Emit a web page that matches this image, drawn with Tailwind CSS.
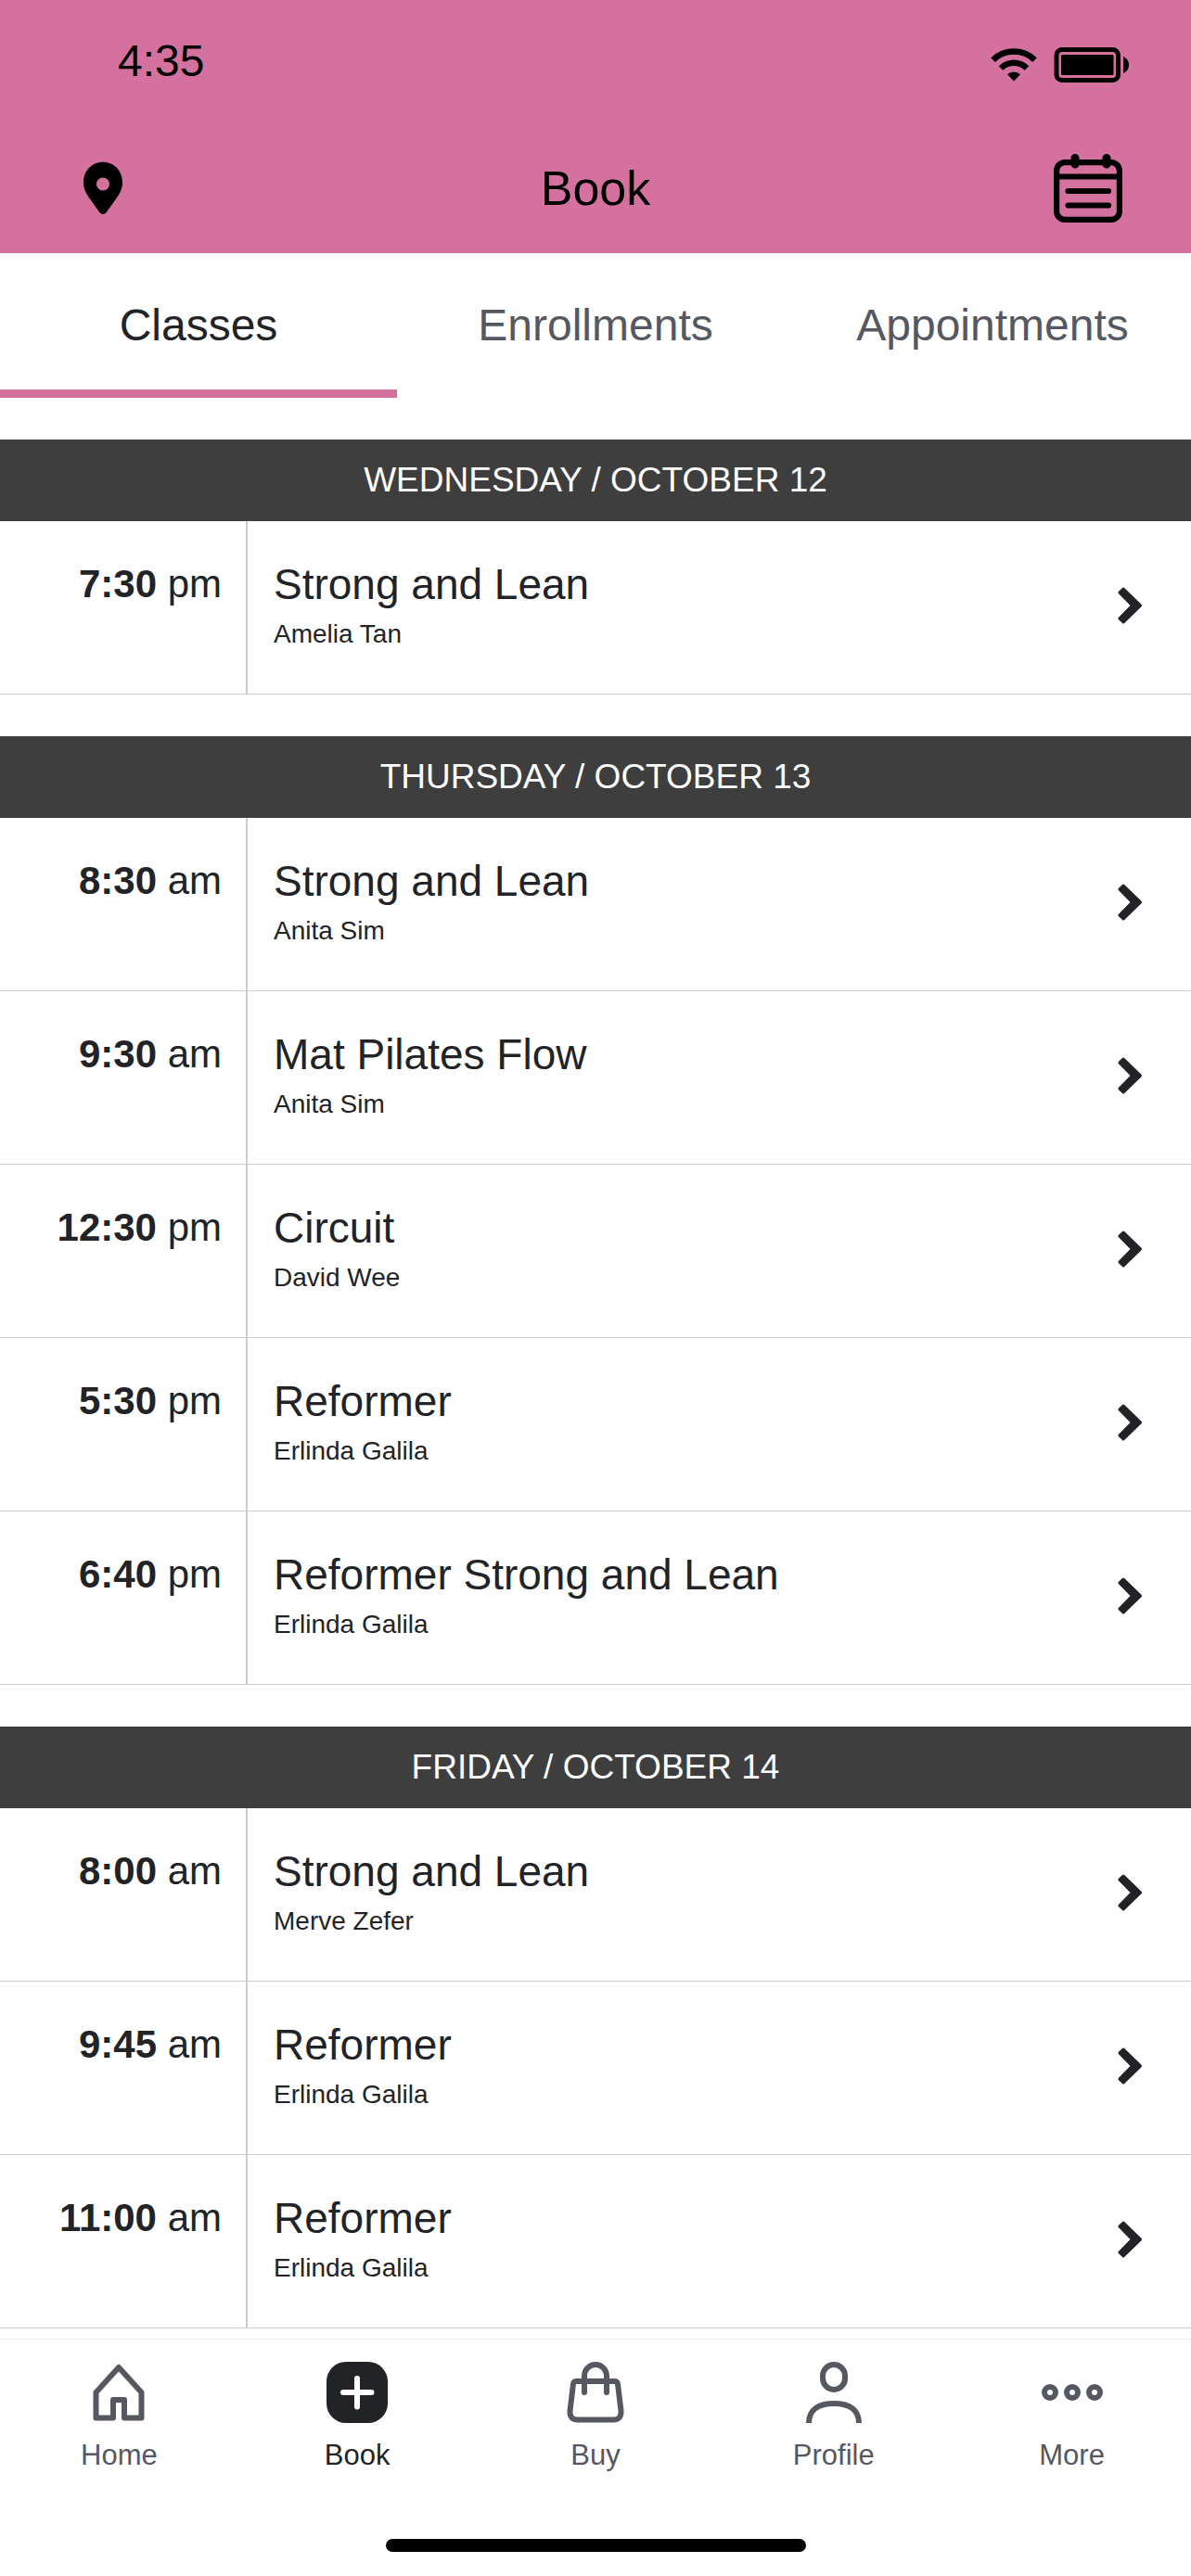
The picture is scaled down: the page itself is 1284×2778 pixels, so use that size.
<!DOCTYPE html>
<html lang="en">
<head>
<meta charset="utf-8">
<meta name="viewport" content="width=device-width, initial-scale=1">
<title>Book</title>
<script src="https://cdn.jsdelivr.net/npm/@tailwindcss/browser@4"></script>
</head>
<body class="flex min-h-screen flex-col bg-white font-['Liberation_Sans',Arial,sans-serif] text-[#222327]">
  <header class="bg-[#d5719f] text-black">
    <div class="flex h-[132px] items-center justify-between pr-[66px] pl-[127px]">
      <time class="text-[48px] leading-[60px]">4:35</time>
      <div class="flex items-center gap-[18px] pt-2">
        <svg class="h-9 w-[50px]" viewBox="0 0 50 36" fill="none" stroke="currentColor" stroke-width="6.5" aria-label="Wi-Fi">
          <path d="M2.500 12.600A32.500 32.500 0 0 1 47.500 12.600"/>
          <path d="M11 21.500A20 20 0 0 1 39 21.500"/>
          <path d="M25 35.500l-7-7.200a10 10 0 0 1 14 0z" fill="currentColor" stroke="none"/>
        </svg>
        <svg class="h-[38px] w-[82px]" viewBox="0 0 82 38" aria-label="Battery full">
          <rect x="3" y="2.5" width="66.5" height="33" rx="6" fill="none" stroke="currentColor" stroke-width="5"/>
          <rect x="8" y="8" width="56.5" height="22" rx="1.5"/>
          <path d="M75 10c3.500 1.500 6 5 6 9s-2.500 7.500-6 9z"/>
        </svg>
      </div>
    </div>
    <div class="grid h-[141px] grid-cols-3 items-center px-[74px]">
      <button type="button" class="justify-self-start pl-[15px]" aria-label="Locations">
        <svg class="h-[57px] w-11" viewBox="0 0 44 57"><path fill="currentColor" fill-rule="evenodd" d="M22 .8C10 .8 1 10.500 1 22.500c0 7.500 3 12.500 7 18L18.500 55.200q3.500 3.600 7 0L36 40.500c4-5.500 7-10.500 7-18C43 10.500 34 .8 22 .8zm0 16.700a7 7 0 1 1 0 14 7 7 0 0 1 0-14z"/></svg>
      </button>
      <h1 class="text-center text-[52px] leading-[60px]">Book</h1>
      <button type="button" class="justify-self-end" aria-label="Calendar">
        <svg class="h-[75px] w-[74px]" viewBox="0 0 74 75" fill="none" stroke="currentColor" stroke-width="6.2" stroke-linecap="round">
          <rect x="3.1" y="10.1" width="67.8" height="61.8" rx="9"/><path d="M5 25.500h64" stroke-linecap="butt"/><path d="M15.500 41h43.500M15.500 56.500h43.500"/><path d="M23 5.500v6.500M57 5.500v6.500" stroke-width="9"/>
        </svg>
      </button>
    </div>
  </header>

  <nav class="grid grid-cols-3 text-center text-[48px] leading-[60px] text-[#565861]" aria-label="Booking type">
    <a href="#classes" aria-current="page" class="border-b-[9px] border-[#d5719f] pt-12 pb-[39px] text-[#222327]">Classes</a>
    <a href="#enrollments" class="pt-12">Enrollments</a>
    <a href="#appointments" class="pt-12">Appointments</a>
  </nav>

  <main id="schedule"></main>

  <footer class="sticky bottom-0 mt-auto border-t border-[#ececee] bg-white pb-[26px]">
    <nav class="grid grid-cols-5 pt-6 text-[31px] leading-[40px] text-[#565861]" aria-label="Main">
      <a href="#home" class="flex flex-col items-center gap-[15px]">
        <svg class="size-[66px]" viewBox="0 0 66 66" fill="none" stroke="currentColor" stroke-width="6" stroke-linejoin="round"><path d="M33 6L57.500 33V60.500H39V41H27V60.500H8.500V33z"/></svg>
        Home
      </a>
      <a href="#book" aria-current="page" class="flex flex-col items-center gap-[15px] text-[#222327]">
        <svg class="size-[66px]" viewBox="0 0 66 66"><rect width="66" height="66" rx="21" fill="currentColor"/><path d="M33 18v30.500M18 33h30.500" stroke="#fff" stroke-width="6" stroke-linecap="round"/></svg>
        Book
      </a>
      <a href="#buy" class="flex flex-col items-center gap-[15px]">
        <svg class="size-[66px]" viewBox="0 0 66 66" fill="none" stroke="currentColor" stroke-width="6" stroke-linecap="round"><path d="M12.500 21h41q3 0 3.500 3l3.500 29q.5 9.500-8 9.500h-39q-8.500 0-8-9.500L9 24q.5-3 3.500-3z"/><path d="M21 33V15a12 12 0 0 1 24 0v18"/></svg>
        Buy
      </a>
      <a href="#profile" class="flex flex-col items-center gap-[15px]">
        <svg class="size-[66px]" viewBox="0 0 66 66" fill="none" stroke="currentColor" stroke-width="6"><rect x="21" y="3" width="24" height="27" rx="12"/><path d="M6 66C6 51 17 45 33 45s27 6 27 21"/></svg>
        Profile
      </a>
      <a href="#more" class="flex flex-col items-center gap-[15px]">
        <svg class="size-[66px]" viewBox="0 0 66 66" fill="none" stroke="currentColor" stroke-width="6"><circle cx="9" cy="33" r="6"/><circle cx="33" cy="33" r="6"/><circle cx="57" cy="33" r="6"/></svg>
        More
      </a>
    </nav>
    <div class="mx-auto mt-[70px] h-3.5 w-[453px] rounded-full bg-black"></div>
  </footer>

  <script>
    const days = [
      ["WEDNESDAY / OCTOBER 12", [["7:30", "pm", "Strong and Lean", "Amelia Tan"]]],
      ["THURSDAY / OCTOBER 13", [
        ["8:30", "am", "Strong and Lean", "Anita Sim"],
        ["9:30", "am", "Mat Pilates Flow", "Anita Sim"],
        ["12:30", "pm", "Circuit", "David Wee"],
        ["5:30", "pm", "Reformer", "Erlinda Galila"],
        ["6:40", "pm", "Reformer Strong and Lean", "Erlinda Galila"]]],
      ["FRIDAY / OCTOBER 14", [
        ["8:00", "am", "Strong and Lean", "Merve Zefer"],
        ["9:45", "am", "Reformer", "Erlinda Galila"],
        ["11:00", "am", "Reformer", "Erlinda Galila"]]]
    ];
    const row = ([time, half, name, teacher]) => `
      <li>
        <a href="#class" class="flex border-b border-[#c8cdd5]">
          <div class="w-[267px] shrink-0 border-r-2 border-[#c8cdd5] pt-[38px] pr-[26px] text-right text-[42px] leading-[60px]"><b>${time}</b> ${half}</div>
          <div class="grow pt-[38px] pb-10 pl-7">
            <h3 class="text-[46px] leading-[60px]">${name}</h3>
            <p class="text-[28px] leading-[48px]">${teacher}</p>
          </div>
          <svg class="mr-[52px] mb-1 h-10 w-[27px] shrink-0 self-center" viewBox="0 0 27 40" aria-hidden="true"><path fill="currentColor" d="M.8 7Q0 6 .8 5L5 1Q6 0 7.200 1L25.500 18.700Q26.500 20 25.500 21.300L7.200 39Q6 40 5 39L.8 35Q0 34 .8 33L13.500 20z"/></svg>
        </a>
      </li>`;
    document.getElementById("schedule").innerHTML = days.map(([day, rows]) => `
      <section class="pt-[45px]">
        <h2 class="bg-[#3e3e3e] py-3.5 text-center text-[37px] leading-[60px] text-white">${day}</h2>
        <ul>${rows.map(row).join("")}</ul>
      </section>`).join("");
  </script>
</body>
</html>
